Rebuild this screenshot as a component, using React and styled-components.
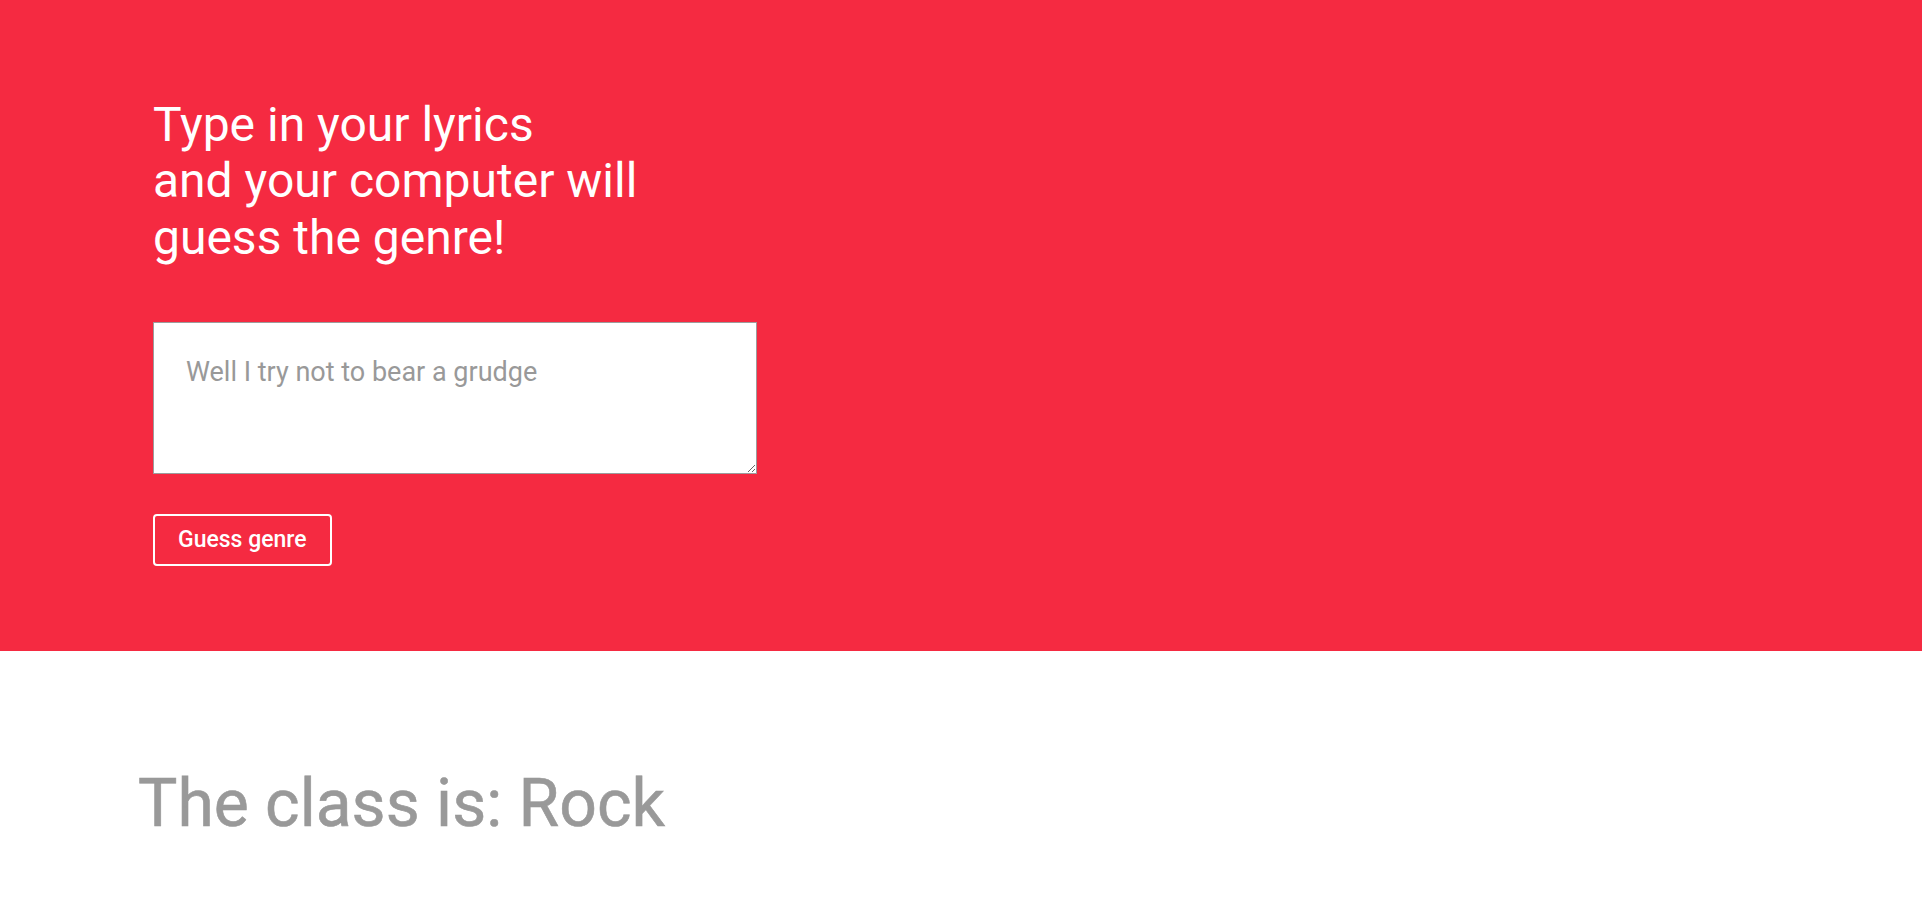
import React, { useState } from "react";
import styled, { createGlobalStyle } from "styled-components";

const GlobalStyle = createGlobalStyle`
  body {
    margin: 0;
    background: #ffffff;
    font-family: Roboto, "Noto Sans", "Liberation Sans", sans-serif;
  }
`;

export default function App() {
  const [lyrics, setLyrics] = useState("");
  const [genre] = useState("Rock");

  function handleLyricsChange(e) {
    setLyrics(e.target.value);
  }

  return (
    <>
      <GlobalStyle />
      <Hero>
        <Heading>
          Type in your lyrics
          <br />
          and your computer will
          <br />
          guess the genre!
        </Heading>
        <LyricsInput
          placeholder="Well I try not to bear a grudge"
          value={lyrics}
          onChange={handleLyricsChange}
        />
        <GuessButton type="button">Guess genre</GuessButton>
      </Hero>
      <Result>
        <ResultText>The class is: {genre}</ResultText>
      </Result>
    </>
  );
}

const Hero = styled.section`
  display: flex;
  flex-direction: column;
  align-items: flex-start;
  background: #f52a41;
  padding: 97px 0 85px 153px;
`;

const Heading = styled.h1`
  margin: 0 0 56px;
  color: #ffffff;
  font-size: 48px;
  font-weight: 400;
  line-height: 56.25px;
`;

const LyricsInput = styled.textarea`
  box-sizing: border-box;
  width: 604px;
  height: 152px;
  margin: 0 0 40px;
  padding: 33px 32px;
  border: 1px solid #9c9c9c;
  background: #ffffff;
  font-family: Roboto, "Noto Sans", sans-serif;
  font-size: 27px;
  line-height: 32px;
  color: #555;
  outline: none;

  &::placeholder {
    color: #999999;
  }
`;

const GuessButton = styled.button`
  box-sizing: border-box;
  height: 52px;
  padding: 0 23px;
  border: 2px solid #ffffff;
  border-radius: 4px;
  background: transparent;
  color: #ffffff;
  font-family: Roboto, "Noto Sans", sans-serif;
  font-size: 23px;
  font-weight: 500;
  cursor: pointer;
`;

const Result = styled.section`
  padding: 114px 0 0 138px;
`;

const ResultText = styled.h2`
  margin: 0;
  color: #999999;
  font-size: 66px;
  font-weight: 400;
  line-height: 78px;
  -webkit-text-stroke: 0.6px #999999;
`;
